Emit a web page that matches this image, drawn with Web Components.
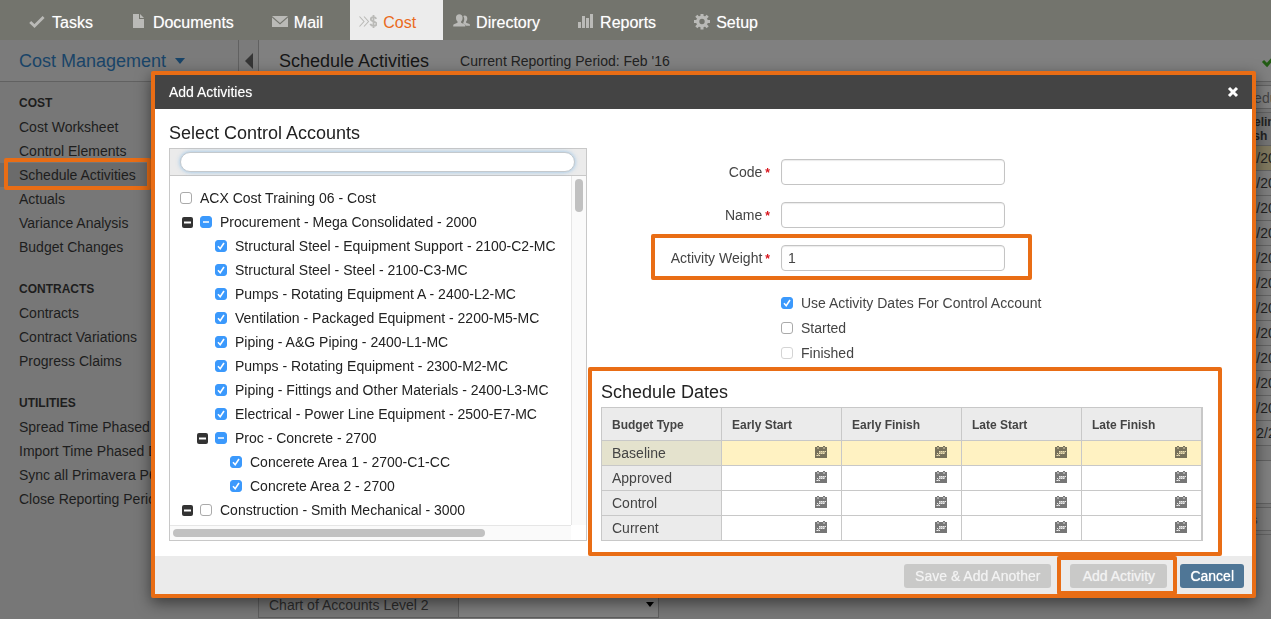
<!DOCTYPE html>
<html lang="en">
<head>
<meta charset="utf-8">
<title>Cost Management - Schedule Activities</title>
<style>
  html, body { margin: 0; height: 100%; }
  body { font: 14px/24px "Liberation Sans", Arial, Helvetica, sans-serif; color: #333; background: #777; overflow: hidden; }
</style>
</head>
<body>
<cost-app></cost-app>

<script>
const ICONS = {
  check: '<svg viewBox="0 0 18 18" width="18" height="18"><path d="M2.200 8 6.500 12 15.600 3" fill="none" stroke="currentColor" stroke-width="2.800"/></svg>',
  doc: '<svg viewBox="0 0 18 18" width="18" height="18"><path fill="currentColor" d="M4 0h6v5h5v9H4z"/><path fill="currentColor" d="M11 0l4 4h-4z"/></svg>',
  mail: '<svg viewBox="0 0 18 18" width="18" height="18"><path fill="currentColor" d="M2 2h16L10 9z"/><path fill="currentColor" d="M2 3.600V13h16V3.600L10 10.600z"/></svg>',
  cost: '<svg viewBox="0 0 18 18" width="18" height="18"><path d="M.5 2.500 5 7.500 .5 12.500M5 2.500 9.500 7.500 5 12.500" fill="none" stroke="currentColor" stroke-width="1.100"/><path d="M17.300 4.900C16.800 3.800 15.800 3.200 14.500 3.200 12.900 3.200 11.800 4 11.800 5.300 11.800 8.100 17.500 6.900 17.500 9.700 17.500 11.100 16.200 11.900 14.600 11.900 13 11.900 11.800 11.200 11.300 9.900M14.500 1v13" fill="none" stroke="currentColor" stroke-width="1.800"/></svg>',
  people: '<svg viewBox="0 0 18 18" width="18" height="18"><path fill="currentColor" d="M12.500 1.600c1.800 0 2.800 1.200 2.800 3 0 1.300-.5 2.400-1.200 3v1.200l3.300 1.300c.6.300.6.900.6 1.700h-4.200c-.1-1.100-.7-1.500-1.700-1.900l-1.200-.6c1-1.300 1.500-3 1.300-4.700-.1-1-.4-1.800-.9-2.500.3-.3.700-.5 1.200-.5z"/><path fill="currentColor" d="M7.300.2c2.100 0 3.300 1.400 3.300 3.500 0 1.600-.6 2.900-1.500 3.700v1.400l3.400 1.500c.8.400.8 1.200.8 2.200H1.200c0-1 0-1.800.8-2.200l3.500-1.500V7.400C4.600 6.600 4 5.300 4 3.700 4 1.600 5.200.2 7.300.2z"/></svg>',
  chart: '<svg viewBox="0 0 18 18" width="18" height="18" shape-rendering="crispEdges"><path fill="currentColor" d="M2 8h3v6H2zM6 2h3v12H6zM10 4h3v10h-3zM14 0h3v14h-3z"/></svg>',
  gear: '<svg viewBox="0 0 18 18" width="18" height="18"><circle cx="10" cy="7.500" r="4.300" fill="none" stroke="currentColor" stroke-width="3.200"/><g stroke="currentColor" stroke-width="3"><path d="M10-.5v3M10 12.500v3M2 7.500h3M15 7.500h3M4.300 1.800l2.200 2.200M13.500 11l2.200 2.200M4.300 13.200l2.200-2.200M13.500 4l2.200-2.200"/></g></svg>',
  calendar: '<svg viewBox="0 0 12 12" width="12" height="12" shape-rendering="crispEdges"><path fill="#777" d="M0 1h2V0h2v1h4V0h2v1h2v11H0z"/><path fill="#aaa" d="M2 1h2v2H2zM8 1h2v2H8z"/><path fill="#eee" d="M4 5h1v1H4zM6 5h1v1H6zM8 5h1v1H8zM10 5h1v1h-1zM2 7h1v1H2zM4 7h1v1H4zM6 7h1v1H6zM8 7h1v1H8zM2 9h1v1H2zM4 9h1v1H4z"/><path fill="#bbb" d="M5 5h1v3H5zM7 5h1v3H7zM9 5h1v3H9zM4 6h5v1H4zM3 8h1v2H3zM1 9h1v1H1z"/></svg>',
  close: '<svg viewBox="0 0 12 12" width="12" height="12"><path d="M2 2l8 8M10 2l-8 8" stroke="#fff" stroke-width="3"/></svg>',
  minus: '<svg viewBox="0 0 11 11" width="11" height="11"><rect width="11" height="11" rx="2" fill="#333"/><path d="M2 4.500h7v2H2z" fill="#fff"/></svg>'
};

function define(name, render, after) {
  customElements.define(name, class extends HTMLElement {
    connectedCallback() {
      if (this.shadowRoot) return;
      const t = document.createElement('template');
      t.innerHTML = render(this);
      this.attachShadow({ mode: 'open' }).append(t.content.cloneNode(true));
      if (after) after(this, this.shadowRoot);
    }
  });
}

const CHECK_CSS = `
  input[type=checkbox] { appearance: none; flex: none; box-sizing: border-box; width: 12px; height: 12px; margin: 0;
    border: 1px solid #aaa; border-radius: 3px; background: #fff center / 12px 12px no-repeat; }
  input:checked, input:indeterminate { border-color: #3b99fc; background-color: #3b99fc; background-origin: border-box; }
  input:checked { background-image: url("data:image/svg+xml,%3Csvg xmlns='http://www.w3.org/2000/svg' viewBox='0 0 12 12'%3E%3Cpath d='M3 6.300 5.200 8.700 9 3' fill='none' stroke='white' stroke-width='1.600'/%3E%3C/svg%3E"); }
  input:indeterminate { background-image: url("data:image/svg+xml,%3Csvg xmlns='http://www.w3.org/2000/svg' viewBox='0 0 12 12'%3E%3Cpath d='M3 6h6' stroke='white' stroke-width='1.600'/%3E%3C/svg%3E"); }
  input:disabled { border-color: #d4d4d4; }`;

/* Orange call-out frame laid over the slotted content */
define('call-out', () => `
  <style>
    :host { display: block; position: relative; }
    :host::after { content: ""; position: absolute; inset: var(--frame); border: 4px solid #e96d15; border-radius: 2px; pointer-events: none; z-index: 1; }
  </style><slot></slot>`);

define('nav-item', el => `
  <style>
    :host { display: flex; }
    a { display: flex; align-items: center; gap: 6px; padding: 5px 27px 0 9px; font-size: 16px; color: #fff; text-decoration: none; text-shadow: 0 0 1px rgba(255,255,255,.5); }
    :host([active]) a { background: #ececec; color: #ea6a20; text-shadow: none; }
    svg { display: block; color: #babab7; }
  </style>
  <a href="#">${ICONS[el.getAttribute('icon')]}<slot></slot></a>`);

define('app-nav', () => `
  <style>
    :host { display: block; background: #73746d; }
    nav { display: flex; height: 40px; padding-left: 19px; }
  </style>
  <nav>
    <nav-item icon="check">Tasks</nav-item>
    <nav-item icon="doc">Documents</nav-item>
    <nav-item icon="mail">Mail</nav-item>
    <nav-item icon="cost" active>Cost</nav-item>
    <nav-item icon="people">Directory</nav-item>
    <nav-item icon="chart">Reports</nav-item>
    <nav-item icon="gear">Setup</nav-item>
  </nav>`);

define('title-bar', () => `
  <style>
    :host { display: grid; grid-template-columns: 238px 21px 1fr; height: 41px; background: #808080; border-bottom: 1px solid #616161; }
    .menu { display: flex; align-items: center; gap: 9px; padding: 0 0 0 19px; border: 0; background: #7b7b7b; font: inherit; font-size: 18px; color: #194468; }
    .menu svg { display: block; }
    .fold { display: flex; align-items: center; justify-content: center; padding: 0; border: solid #616161; border-width: 0 1px; background: #7b7b7b; }
    header { display: flex; align-items: center; gap: 31px; padding: 1px 0 0 20px; color: #222; }
    h1 { margin: 0; font-size: 18px; font-weight: 400; color: #161616; }
    header svg { margin-left: auto; }
  </style>
  <button class="menu">Cost Management<svg width="10" height="6"><path d="M0 0h10L5 6z" fill="#194468"/></svg></button>
  <button class="fold" aria-label="Collapse menu"><svg width="8" height="16"><path d="M8 0v16L0 8z" fill="#363636"/></svg></button>
  <header><h1>Schedule Activities</h1><span>Current Reporting Period: Feb '16</span>
    <svg width="10" height="12" overflow="visible"><path d="M2 6l4 4 7-8" fill="none" stroke="#235c14" stroke-width="3"/></svg></header>`);

define('side-link', () => `
  <style>
    :host { display: block; height: 24px; }
    :host([active]) { background: #6b6b6b; }
    a { display: block; padding-left: 19px; color: #1d1d1d; text-decoration: none; white-space: nowrap; }
    call-out { --frame: -5px 88px -3px 4px; }
  </style>
  <a href="#"><slot></slot></a>`,
  (el, root) => {
    if (el.hasAttribute('active')) {
      const c = document.createElement('call-out');
      const a = root.querySelector('a');
      a.replaceWith(c); c.append(a);
    }
  });

define('side-nav', () => `
  <style>
    :host { display: block; padding-top: 8px; }
    section { margin-bottom: 17px; }
    h2 { margin: 0; padding: 1px 0 0 19px; font-size: 12px; line-height: 24px; color: #1d1d1d; }
  </style>
  <nav>
    <section><h2>COST</h2>
      <side-link>Cost Worksheet</side-link><side-link>Control Elements</side-link>
      <side-link active>Schedule Activities</side-link><side-link>Actuals</side-link>
      <side-link>Variance Analysis</side-link><side-link>Budget Changes</side-link></section>
    <section><h2>CONTRACTS</h2>
      <side-link>Contracts</side-link><side-link>Contract Variations</side-link><side-link>Progress Claims</side-link></section>
    <section><h2>UTILITIES</h2>
      <side-link>Spread Time Phased Budget</side-link><side-link>Import Time Phased Data</side-link>
      <side-link>Sync all Primavera P6</side-link><side-link>Close Reporting Period</side-link></section>
  </nav>`);

define('activity-list', () => `
  <style>
    :host { display: block; padding-top: 3px; overflow: hidden; white-space: nowrap; }
    .tools { display: flex; justify-content: flex-end; height: 22px; border: solid #616161; border-width: 1px 0; background: #808080; margin-bottom: 3px; }
    .tools button { width: 41px; padding: 0; border: 0; background: none; font: inherit; text-align: left; color: #444; }
    table { width: 100%; table-layout: fixed; border-collapse: collapse; background: #7e7e7e; }
    col.date { width: 47px; }
    th { height: 33px; padding: 0 0 0 8px; box-sizing: border-box; border: solid #616161; border-width: 1px 0; background: #747474; font-size: 12px; line-height: 14px; text-align: left; color: #222; }
    td { height: 24px; padding: 0 0 0 5px; border-bottom: 1px solid #636363; color: #222; }
    tbody tr:first-child td { background: #80795f; }
    .gap { height: 14px; border-bottom: 1px solid #616161; background: #7a7a7a; }
    .detail { height: 42px; border-bottom: 1px solid #616161; background: #808080; }
    .tabs { display: flex; justify-content: flex-end; margin: 3px 0; height: 22px; border: solid #616161; border-width: 1px 0; background: #7b7b7b; }
    .tabs a { width: 46px; font-size: 12px; font-weight: 700; color: #444; text-decoration: none; }
    .rest { border-top: 1px solid #616161; height: 57px; }
    .field { display: grid; grid-template-columns: 200px 199px; width: max-content; border: 1px solid #5e5e5e; }
    label { height: 24px; padding-left: 10px; box-sizing: border-box; border-right: 1px solid #5e5e5e; background: #757575; color: #2c2c2c; }
    select { appearance: none; border: 0; border-radius: 0; margin: 0; background: #808080; }
    .pick { position: relative; display: grid; }
    .pick svg { position: absolute; right: 4px; top: 9px; }
  </style>
  <div class="tools"><button>Schedule</button></div>
  <table>
    <colgroup><col><col class="date"></colgroup>
    <thead><tr><th></th><th>Baseline<br>Finish</th></tr></thead>
    <tbody>${Array.from({ length: 12 }, (_, i) => `<tr><td></td><td>${i < 11 ? '1/02/2016' : '21/12/2016'}</td></tr>`).join('')}</tbody>
  </table>
  <div class="gap"></div><div class="detail"></div>
  <div class="tabs"><a href="#">Dates</a></div>
  <div class="rest"></div>
  <div class="field"><label for="level">Chart of Accounts Level 2</label>
    <div class="pick"><select id="level"><option></option></select><svg width="8" height="5"><path d="M0 0h8L4 5z" fill="#000"/></svg></div></div>`);

define('text-field', el => `
  <style>
    :host { display: grid; grid-template-columns: 169px 224px; gap: 11px; align-items: center; color: #444; }
    label { text-align: right; }
    b { margin-left: 3px; font-size: 12px; color: #d8141c; }
    input { height: 26px; box-sizing: border-box; padding: 0 6px; border: 1px solid #c4c4c4; border-radius: 4px; background: #fff; font: inherit; color: #444; box-shadow: inset 0 1px 1px rgba(0,0,0,.08); }
  </style>
  <label for="f">${el.getAttribute('label')}<b>*</b></label><input id="f" type="text" value="${el.getAttribute('value') || ''}">`);

define('check-field', el => `
  <style>
    :host { display: block; }
    label { display: flex; align-items: center; gap: 8px; height: 25px; color: #444; }
    ${CHECK_CSS}
  </style>
  <label><input type="checkbox" ${el.hasAttribute('checked') ? 'checked' : ''} ${el.hasAttribute('disabled') ? 'disabled' : ''}><slot></slot></label>`);

define('tree-node', el => `
  <style>
    :host { display: flex; align-items: center; height: 24px; white-space: nowrap; color: #222; }
    :host([level="0"]) { padding-left: 10px; }
    :host([level="1"]) { padding-left: 12px; }
    :host([level="2"]) { padding-left: 27px; }
    :host([level="3"]) { padding-left: 42px; }
    button, i { width: 11px; height: 11px; margin-right: 7px; padding: 0; border: 0; background: none; }
    button svg { display: block; }
    label { display: flex; align-items: center; gap: 8px; }
    ${CHECK_CSS}
  </style>
  ${el.hasAttribute('open') ? `<button aria-label="Collapse">${ICONS.minus}</button>` : el.getAttribute('level') === '0' ? '' : '<i></i>'}
  <label><input type="checkbox" ${el.hasAttribute('checked') ? 'checked' : ''}><slot></slot></label>`,
  (el, root) => { root.querySelector('input').indeterminate = el.hasAttribute('partial'); });

define('account-tree', () => `
  <style>
    :host { display: block; border: 1px solid #c8c8c8; }
    .search { display: grid; padding: 3px 11px 3px 10px; border-bottom: 1px solid #c8c8c8; background: #ebebeb; }
    .search input { height: 20px; box-sizing: border-box; padding: 0 10px; border: 1px solid #c4c9cd; border-radius: 10px; outline: 0; background: #fff; font: inherit; box-shadow: 0 0 4px rgba(110,175,230,.7); }
    .view { display: grid; grid-template-columns: 1fr 15px; }
    .nodes { padding: 10px 0 3px; overflow: hidden; }
    .v { padding: 3px 3px 0; border-left: 1px solid #e6e6e6; background: #fafafa; }
    .h { padding: 3px; border-top: 1px solid #e6e6e6; background: #fafafa; }
    .v div { height: 33px; border-radius: 4px; background: #c1c1c1; }
    .h div { width: 79%; height: 8px; border-radius: 4px; background: #c1c1c1; }
  </style>
  <div class="search"><input type="text" aria-label="Search control accounts"></div>
  <div class="view">
    <div class="nodes">
      <tree-node level="0">ACX Cost Training 06 - Cost</tree-node>
      <tree-node level="1" open partial>Procurement - Mega Consolidated - 2000</tree-node>
      <tree-node level="2" checked>Structural Steel - Equipment Support - 2100-C2-MC</tree-node>
      <tree-node level="2" checked>Structural Steel - Steel - 2100-C3-MC</tree-node>
      <tree-node level="2" checked>Pumps - Rotating Equipment A - 2400-L2-MC</tree-node>
      <tree-node level="2" checked>Ventilation - Packaged Equipment - 2200-M5-MC</tree-node>
      <tree-node level="2" checked>Piping - A&amp;G Piping - 2400-L1-MC</tree-node>
      <tree-node level="2" checked>Pumps - Rotating Equipment - 2300-M2-MC</tree-node>
      <tree-node level="2" checked>Piping - Fittings and Other Materials - 2400-L3-MC</tree-node>
      <tree-node level="2" checked>Electrical - Power Line Equipment - 2500-E7-MC</tree-node>
      <tree-node level="2" open partial>Proc - Concrete - 2700</tree-node>
      <tree-node level="3" checked>Concerete Area 1 - 2700-C1-CC</tree-node>
      <tree-node level="3" checked>Concrete Area 2 - 2700</tree-node>
      <tree-node level="1" open>Construction - Smith Mechanical - 3000</tree-node>
    </div>
    <div class="v"><div></div></div>
    <div class="h"><div></div></div>
  </div>`);

define('date-input', el => `
  <style>
    :host { display: flex; align-items: center; height: 24px; padding: 0 14px 0 10px; }
    input { flex: 1; min-width: 0; height: 20px; padding: 0; border: 0; outline: 0; background: none; font: inherit; }
    button { padding: 0 0 2px; border: 0; background: none; mix-blend-mode: multiply; }
    svg { display: block; }
  </style>
  <input type="text" aria-label="${el.getAttribute('label')}"><button aria-label="Pick date">${ICONS.calendar}</button>`);

const COLS = ['Early Start', 'Early Finish', 'Late Start', 'Late Finish'];
define('schedule-dates', () => `
  <style>
    :host { display: block; }
    h2 { margin: 0 0 3px; font-size: 18px; line-height: 24px; font-weight: 400; color: #222; }
    table { width: 100%; table-layout: fixed; border-collapse: separate; border-spacing: 0; border: solid #c8c8c8; border-width: 1px 1px 0 1px; color: #444; }
    th, td { padding: 0; border: solid #c8c8c8; border-width: 0 1px 1px 0; text-align: left; }
    th { padding-left: 10px; background: #ebebeb; font-weight: 400; }
    thead th { height: 32px; padding-top: 1px; box-sizing: border-box; height: 33px; font-size: 12px; font-weight: 700; }
    tbody tr:first-child th { background: #e4e2cd; }
    tbody tr:first-child td { background: #fff2c2; }
  </style>
  <h2>Schedule Dates</h2>
  <table>
    <thead><tr><th scope="col">Budget Type</th>${COLS.map(c => `<th scope="col">${c}</th>`).join('')}</tr></thead>
    <tbody>${['Baseline', 'Approved', 'Control', 'Current'].map(r =>
      `<tr><th scope="row">${r}</th>${COLS.map(c => `<td><date-input label="${r} ${c}"></date-input></td>`).join('')}</tr>`).join('')}</tbody>
  </table>`);

define('action-button', el => `
  <style>
    :host { display: block; }
    button { display: block; height: 24px; padding: 0 10px; border: 0; border-radius: 3px; background: #4f7696; font: inherit; color: #fff; text-shadow: 0 0 1px #fff; }
    button:disabled { min-width: 97px; padding: 0 11px; background: #c9c9c8; color: #f2f2f2; text-shadow: 0 0 1px rgba(255,255,255,.6); }
  </style>
  <button ${el.hasAttribute('disabled') ? 'disabled' : ''}><slot></slot></button>`);

define('activity-dialog', () => `
  <style>
    :host { display: block; border: 4px solid #e96d15; border-radius: 2px; background: #fff; box-shadow: 0 5px 15px rgba(0,0,0,.5); }
    header { display: flex; justify-content: space-between; align-items: center; height: 34px; padding: 0 13px 0 14px; background: #444; color: #fff; text-shadow: 0 0 1px rgba(255,255,255,.5); }
    header button { padding: 0; border: 0; background: none; }
    header svg { display: block; }
    .body { display: flex; gap: 14px; padding: 12px 49px 15px 14px; }
    .accounts { flex: none; width: 418px; }
    .form { flex: 1; min-width: 0; padding-top: 38px; }
    h2 { margin: 0 0 3px; font-size: 18px; line-height: 24px; font-weight: 400; color: #222; }
    .fields { display: grid; gap: 17px; justify-content: start; }
    .weight { --frame: -11px -27px -9px 50px; }
    .flags { margin: 19px 0 15px; padding-left: 180px; }
    .dates { --frame: -13px -19px -15px -13px; }
    footer { display: flex; justify-content: flex-end; padding: 8px 8px 6px; background: #ebebeb; }
    footer call-out { --frame: -8px -10px -7px -13px; margin: 0 13px 0 19px; }
  </style>
  <header><span>Add Activities</span><button aria-label="Close">${ICONS.close}</button></header>
  <div class="body">
    <div class="accounts"><h2>Select Control Accounts</h2><account-tree></account-tree></div>
    <div class="form">
      <div class="fields">
        <text-field label="Code"></text-field>
        <text-field label="Name"></text-field>
        <call-out class="weight"><text-field label="Activity Weight" value="1"></text-field></call-out>
      </div>
      <div class="flags">
        <check-field checked>Use Activity Dates For Control Account</check-field>
        <check-field>Started</check-field>
        <check-field disabled>Finished</check-field>
      </div>
      <call-out class="dates"><schedule-dates></schedule-dates></call-out>
    </div>
  </div>
  <footer>
    <action-button disabled>Save &amp; Add Another</action-button>
    <call-out><action-button disabled>Add Activity</action-button></call-out>
    <action-button>Cancel</action-button>
  </footer>`);

define('cost-app', () => `
  <style>
    :host { display: block; position: relative; min-height: 100vh; background: #777; }
    .page { display: grid; grid-template-columns: 239px 1fr; column-gap: 19px; }
    activity-dialog { position: absolute; left: 151px; right: 15px; top: 71px; z-index: 2; }
  </style>
  <app-nav></app-nav>
  <title-bar></title-bar>
  <div class="page"><side-nav></side-nav><activity-list></activity-list></div>
  <activity-dialog role="dialog" aria-label="Add Activities"></activity-dialog>`);
</script>
</body>
</html>
